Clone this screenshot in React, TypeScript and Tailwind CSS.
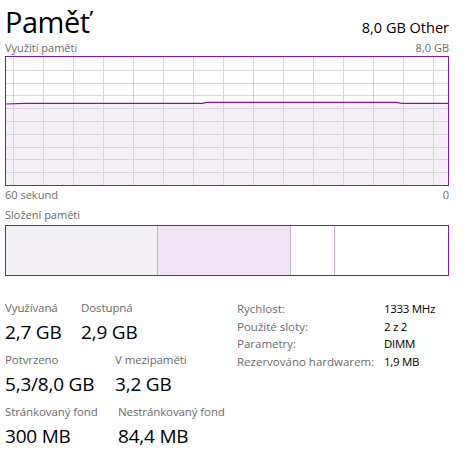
import React from "react"

const font = { fontFamily: '"Open Sans", "Noto Sans", "Liberation Sans", sans-serif' }

function UsageGraph() {
  const cols = Array.from({ length: 15 }, (_, i) => 7 + i * 30)
  const rows = Array.from({ length: 9 }, (_, i) => (i + 1) * 12.8)
  const line = "M0,47 L18,46.3 L196,46.3 L201,45.3 L390,45.3 L396,46.3 L442,46.3"
  return (
    <div className="h-[130px] w-[444px] border border-[#8b12ae] bg-white">
      <svg width="442" height="128" className="block">
        <path d={`${line} L442,128 L0,128 Z`} fill="#f4f0f6" />
        {cols.map((x) => (
          <line key={`c${x}`} x1={x + 0.5} x2={x + 0.5} y1={0} y2={128} stroke="#ddd0e3" strokeWidth={1} />
        ))}
        {rows.map((y) => (
          <line key={`r${y}`} x1={0} x2={442} y1={Math.round(y) + 0.5} y2={Math.round(y) + 0.5} stroke="#ddd0e3" strokeWidth={1} />
        ))}
        <path d={line} fill="none" stroke="#8b12ae" strokeWidth={1.2} />
      </svg>
    </div>
  )
}

function CompositionBar() {
  return (
    <div className="flex h-[51px] w-[444px] border border-[#8b12ae] bg-white">
      <div className="w-[151px] bg-[#f3f0f5]" />
      <div className="w-[133px] border-l border-[#c9aed5] bg-[#efe5f3]" />
      <div className="w-[44px] border-l border-[#c9aed5]" />
      <div className="flex-1 border-l border-[#c9aed5]" />
    </div>
  )
}

function Stat({ label, value, className = "" }: { label: string; value: string; className?: string }) {
  return (
    <div className={className}>
      <div className="text-[11.5px] leading-[16px] tracking-[-0.1px] text-[#6b6b6b]">{label}</div>
      <div className="mt-[3px] text-[19px] leading-[26px] tracking-[-0.2px] text-black">{value}</div>
    </div>
  )
}

const details = [
  ["Rychlost:", "1333 MHz"],
  ["Použité sloty:", "2 z 2"],
  ["Parametry:", "DIMM"],
  ["Rezervováno hardwarem:", "1,9 MB"],
]

export default function App() {
  return (
    <div className="h-[456px] w-[468px] bg-white pl-[5px] pt-[4px] text-black" style={font}>
      <div className="flex w-[444px] items-end justify-between">
        <div className="text-[29px] leading-[36px] tracking-[-0.5px]">Paměť</div>
        <div className="pb-[2px] text-[14.5px] leading-[20px]">8,0 GB Other</div>
      </div>
      <div className="flex w-[444px] justify-between text-[11px] leading-[16px] text-[#6b6b6b]">
        <span>Využití paměti</span>
        <span>8,0 GB</span>
      </div>
      <UsageGraph />
      <div className="flex w-[444px] justify-between text-[11px] leading-[18px] text-[#6b6b6b]">
        <span>60 sekund</span>
        <span>0</span>
      </div>
      <div className="text-[11px] leading-[21px] text-[#6b6b6b]">Složení paměti</div>
      <CompositionBar />

      <div className="mt-[24px] flex">
        <div className="flex w-[232px] flex-col gap-[7px]">
          <div className="flex">
            <Stat label="Využívaná" value="2,7 GB" className="w-[76px]" />
            <Stat label="Dostupná" value="2,9 GB" />
          </div>
          <div className="flex">
            <Stat label="Potvrzeno" value="5,3/8,0 GB" className="w-[110px]" />
            <Stat label="V mezipaměti" value="3,2 GB" />
          </div>
          <div className="flex">
            <Stat label="Stránkovaný fond" value="300 MB" className="w-[113px]" />
            <Stat label="Nestránkovaný fond" value="84,4 MB" />
          </div>
        </div>
        <div className="flex flex-col text-[11.5px] leading-[17.5px]">
          {details.map(([k, v]) => (
            <div key={k} className="flex">
              <span className="w-[147px] text-[#6b6b6b]">{k}</span>
              <span className="tracking-[-0.3px]">{v}</span>
            </div>
          ))}
        </div>
      </div>
    </div>
  )
}
